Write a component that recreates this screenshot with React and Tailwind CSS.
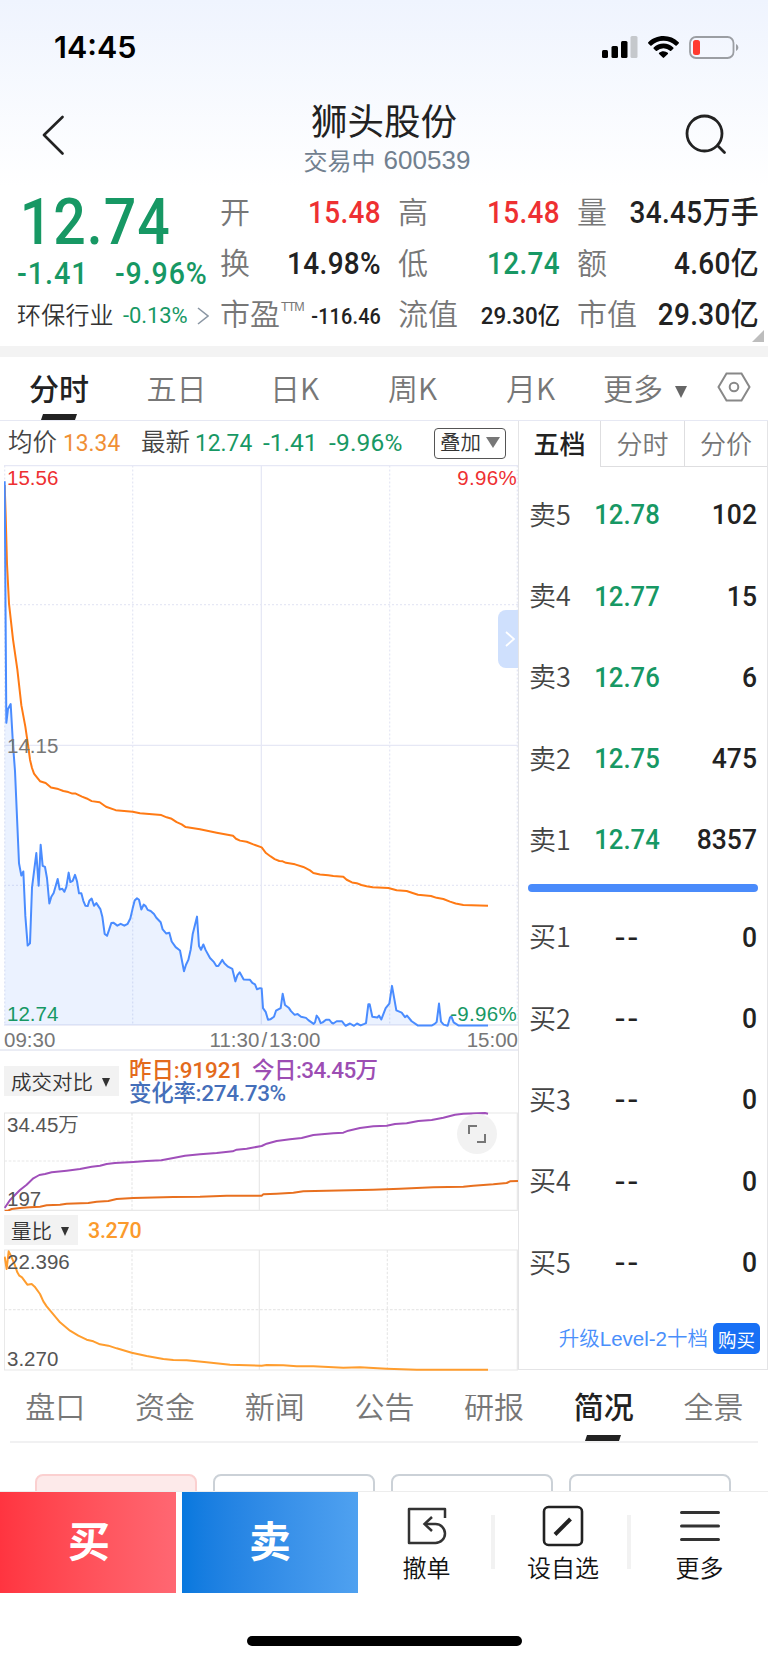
import React from 'react';

const periods = ['分时', '五日', '日K', '周K', '月K'];

const sells = [
    { label: '卖5', price: '12.78', qty: '102' },
    { label: '卖4', price: '12.77', qty: '15' },
    { label: '卖3', price: '12.76', qty: '6' },
    { label: '卖2', price: '12.75', qty: '475' },
    { label: '卖1', price: '12.74', qty: '8357' },
];

const buys = ['买1', '买2', '买3', '买4', '买5'];

const sections = ['盘口', '资金', '新闻', '公告', '研报', '简况', '全景'];

const priceLine =
    '14,30 19,672 24,635 32,622 39,730 45,800 57,1045 64,1078 70,1067 76,1185 83,1264 90,1258 96,1110 109,1018 116,1105 122,996 128,1052 135,1055 141,1085 148,1152 154,1134 161,1124 173,1087 179,1115 187,1113 193,1121 199,1108 206,1070 211,1095 218,1092 225,1076 231,1093 237,1125 244,1125 250,1145 256,1158 263,1159 268,1145 275,1139 282,1158 289,1151 301,1167 307,1187 314,1233 321,1238 327,1223 334,1204 340,1203 352,1211 362,1206 373,1211 383,1206 391,1192 398,1165 404,1144 411,1138 417,1142 424,1168 431,1155 437,1159 443,1169 452,1172 462,1180 469,1190 482,1202 488,1221 499,1232 508,1230 515,1253 527,1268 540,1277 552,1332 558,1315 565,1302 572,1275 578,1234 591,1187 597,1265 603,1275 610,1261 617,1276 630,1297 642,1308 649,1318 655,1318 667,1302 673,1311 684,1320 697,1326 706,1359 712,1343 719,1335 731,1354 750,1355 757,1363 765,1367 771,1380 780,1377 785,1378 789,1430 797,1440 804,1461 811,1460 822,1453 828,1437 842,1430 848,1392 855,1422 867,1430 873,1438 884,1448 893,1446 903,1453 918,1456 925,1462 941,1472 945,1468 950,1450 956,1457 962,1470 968,1468 978,1461 988,1461 995,1469 1000,1471 1010,1465 1026,1465 1032,1472 1037,1477 1050,1471 1062,1477 1071,1471 1082,1476 1093,1472 1098,1470 1105,1420 1109,1420 1117,1453 1132,1455 1137,1450 1144,1460 1157,1430 1168,1418 1176,1371 1189,1436 1205,1442 1215,1454 1221,1450 1235,1465 1253,1476 1296,1476 1304,1472 1310,1467 1317,1418 1323,1466 1331,1474 1343,1477 1350,1455 1354,1452 1361,1468 1375,1476 1464,1476';

const averageLine =
    '14,40 17,120 21,250 27,355 39,450 52,530 64,625 76,682 84,730 90,770 96,792 102,807 112,818 120,827 137,832 153,844 175,848 190,853 205,856 217,860 227,860 246,868 260,873 275,880 299,883 318,895 347,904 398,908 420,912 484,917 500,923 515,927 530,936 545,942 557,949 600,955 650,964 699,972 708,980 720,985 740,988 760,995 785,1003 798,1018 812,1027 824,1034 838,1039 848,1040 858,1044 885,1048 910,1055 930,1064 940,1071 960,1075 985,1077 1000,1079 1030,1081 1040,1089 1056,1096 1070,1098 1084,1103 1100,1106 1118,1109 1165,1111 1190,1117 1220,1119 1240,1125 1254,1129 1293,1132 1310,1137 1330,1140 1350,1147 1367,1152 1390,1156 1464,1158';

const todayVolume =
    '14,592 30,568 60,538 80,522 100,503 118,493 135,490 155,485 200,480 240,475 275,468 300,465 320,460 345,457 400,454 440,451 484,449 520,442 555,435 600,431 650,427 698,422 710,417 740,414 785,406 800,399 830,391 870,386 905,382 940,373 1000,368 1030,366 1045,360 1080,352 1120,347 1160,345 1185,340 1220,338 1255,331 1295,328 1330,321 1365,312 1390,309 1455,307 1464,309';

const lastVolume =
    '14,600 24,600 35,595 60,592 90,590 120,588 140,584 180,582 200,579 265,577 290,573 325,571 350,565 400,562 490,560 520,559 600,558 680,555 785,555 790,551 830,549 880,546 910,542 980,540 1120,537 1200,534 1300,530 1390,528 1420,525 1480,521 1520,517 1530,512 1554,511';

const ratioLine =
    '14,738 20,775 26,722 34,738 44,762 52,785 58,795 66,800 82,822 95,820 104,828 120,850 130,872 140,887 155,905 180,935 210,960 235,975 260,987 280,992 300,1001 325,1005 350,1013 395,1026 440,1036 490,1045 520,1048 560,1049 620,1055 690,1062 785,1065 800,1063 850,1064 890,1067 940,1067 1030,1071 1080,1070 1160,1074 1250,1077 1464,1077';

const Line = ({ points, color, width = 2 }) => (
    <polyline
        points={points}
        fill="none"
        stroke={color}
        strokeWidth={width}
        strokeLinejoin="round"
        vectorEffect="non-scaling-stroke"
    />
);

const StatusBar = () => (
    <div className="flex h-[94px] items-center justify-between pl-[54px] pr-[29px]">
        <span className="font-['Inter',sans-serif] text-[30.5px] font-semibold text-black">14:45</span>
        <div className="flex items-center">
            <svg width="36" height="22" viewBox="0 0 36 22" className="mr-[10px]">
                <rect x="0" y="14" width="6" height="8" rx="1.5" />
                <rect x="9.5" y="10" width="6.5" height="12" rx="1.5" />
                <rect x="19" y="5" width="6.5" height="17" rx="1.5" />
                <rect x="28.5" y="0" width="7" height="22" rx="1.5" fill="#c5c8cc" />
            </svg>
            <svg width="31" height="23" viewBox="0 0 31 23" className="mr-[10px]">
                <path d="M15.5 0C9.6 0 4.2 2.300 .3 6.200c-.4.4-.4.900 0 1.300l2 2c.4.4.9.4 1.300 0A17 17 0 0 1 15.500 4.800a17 17 0 0 1 11.900 4.700c.4.4.9.4 1.300 0l2-2c.4-.4.4-.9 0-1.300A21.700 21.700 0 0 0 15.500 0z" />
                <path d="M15.5 7.600c-3.800 0-7.200 1.400-9.800 3.800-.4.4-.4.900 0 1.300l2.100 2c.4.4.8.4 1.200 0a9.500 9.500 0 0 1 13 0c.4.4.8.4 1.200 0l2.100-2c.4-.4.4-.9 0-1.300a14.400 14.400 0 0 0-9.800-3.800z" />
                <path d="M15.5 15.200c-1.700 0-3.200.6-4.400 1.500-.4.400-.4.900 0 1.200l3.700 3.700c.4.400.9.400 1.300 0l3.800-3.700c.3-.4.3-.9-.1-1.200a7 7 0 0 0-4.300-1.500z" />
            </svg>
            <svg width="50" height="23" viewBox="0 0 50 23">
                <rect x="1" y="1" width="43.500" height="21" rx="6" fill="none" stroke="#9b9ea3" strokeWidth="1.800" />
                <rect x="4" y="4" width="7" height="15" rx="2.500" fill="#ff3b30" />
                <path d="M47 8c1.600.8 2.300 2 2.300 3.500S48.600 14.200 47 15z" fill="#9b9ea3" />
            </svg>
        </div>
    </div>
);

const Header = () => (
    <div className="flex h-[93px] items-start justify-between pl-[42px] pr-[40px]">
        <svg width="22" height="40" viewBox="0 0 22 40" className="mt-[21px]" fill="none" stroke="#222" strokeWidth="2.600" strokeLinejoin="round" strokeLinecap="round">
            <path d="M20.500 2L2 20l18.500 18.500" />
        </svg>
        <div className="ml-[20px] flex flex-col items-center">
            <h1 className="mt-[3px] h-[46px] text-[36.500px] leading-[46px] text-[#222]">狮头股份</h1>
            <p className="flex h-[34px] items-center gap-[8px] pl-[6px] text-[24px] leading-[34px] text-[#71808f]">
                <span>交易中</span>
                <span className="font-['Liberation_Sans',sans-serif] text-[26px]">600539</span>
            </p>
        </div>
        <svg width="44" height="42" viewBox="0 0 44 42" className="mt-[19px]" fill="none" stroke="#222" strokeWidth="2.800" strokeLinecap="round">
            <circle cx="20.500" cy="20.500" r="17.500" />
            <path d="M34 33l6.500 6.500" />
        </svg>
    </div>
);

const statSizes = {
    base: 'text-[31px] scale-x-90 tracking-[0.4px]',
    sm: 'text-[23.500px] scale-x-95 pt-[3px]',
    xs: 'text-[22px] scale-x-90 pt-[3px] tracking-[0.200px]',
};

const Stat = ({ label, sup, value, color = 'text-[#222]', size = 'base' }) => (
    <div className="flex h-[51px] items-center justify-between whitespace-nowrap">
        <span className="flex h-[51px] shrink-0 text-[30px] font-[350] leading-[47px] text-[#777]">
            {label}
            {sup && <span className="pt-[11px] pl-[1px] font-['Liberation_Sans',sans-serif] text-[12.500px] leading-[14px] tracking-[-1px]">{sup}</span>}
        </span>
        <span className={`w-0 origin-right font-['Roboto','Noto_Sans_CJK_SC',sans-serif] font-medium leading-[51px] [direction:rtl] ${statSizes[size]} ${color}`}>
            <bdi dir="ltr">{value}</bdi>
        </span>
    </div>
);

const Quote = () => (
    <div className="relative flex h-[159px] pl-[17px]">
        <div className="w-[203px] font-['Roboto','Noto_Sans_CJK_SC',sans-serif] text-[#179864]">
            <div className="h-[60px] origin-left scale-x-88 pl-[3px] text-[65px] font-medium leading-[70px] tracking-[1.200px]">12.74</div>
            <div className="flex h-[50px] text-[31px] font-medium leading-[53px] tracking-[1px]">
                <span className="w-[98px] origin-left scale-x-93">-1.41</span>
                <span className="origin-left scale-x-92">-9.96%</span>
            </div>
            <div className="flex h-[38px] items-center">
                <span className="w-[106px] text-[24px] font-[350] leading-[38px] tracking-[0.200px] text-[#333]">环保行业</span>
                <span className="text-[22px] leading-[38px] tracking-[-0.100px]">-0.13%</span>
                <svg width="12" height="18" viewBox="0 0 12 18" className="ml-[9px]" fill="none" stroke="#8a96a3" strokeWidth="1.600">
                    <path d="M1 1l10 8-10 8" />
                </svg>
            </div>
        </div>
        <div className="w-[161px]">
            <Stat label="开" value="15.48" color="text-[#ee3032]" />
            <Stat label="换" value="14.98%" />
            <Stat label="市盈" sup="TTM" value="-116.46" size="xs" />
        </div>
        <div className="ml-[17px] w-[162px]">
            <Stat label="高" value="15.48" color="text-[#ee3032]" />
            <Stat label="低" value="12.74" color="text-[#179864]" />
            <Stat label="流值" value="29.30亿" size="sm" />
        </div>
        <div className="ml-[17px] w-[182px]">
            <Stat label="量" value="34.45万手" />
            <Stat label="额" value="4.60亿" />
            <Stat label="市值" value="29.30亿" />
        </div>
        <svg width="12" height="12" viewBox="0 0 12 12" className="absolute right-[4px] bottom-[4px]">
            <path d="M12 0v12H0z" fill="#bdbdbd" />
        </svg>
    </div>
);

const Underline = () => (
    <svg width="36" height="6" viewBox="0 0 36 6" className="absolute bottom-0 left-1/2 -translate-x-1/2">
        <path d="M2 0h34l-2 6H0z" fill="#222" />
    </svg>
);

const PeriodTabs = () => (
    <div className="flex h-[64px] border-b border-[#e6e8f3] text-[30px] font-[350] leading-[60px] text-[#777]">
        {periods.map((name, i) => (
            <div key={name} className={i === 0 ? 'relative w-[118px] text-center font-medium text-[#222]' : 'w-[118px] pr-[1px] text-center'}>
                {name}
                {i === 0 && <Underline />}
            </div>
        ))}
        <div className="flex h-[60px] items-center pl-[13px]">
            更多
            <svg width="12" height="12" viewBox="0 0 12 12" className="mt-[9px] ml-[12px]">
                <path d="M0 0h12L6 12z" fill="#666" />
            </svg>
        </div>
        <svg width="34" height="30" viewBox="0 0 34 30" className="mt-[15px] ml-[30px]" fill="none" stroke="#888" strokeWidth="2">
            <path d="M9.500 1.500h15L32.500 15l-8 13.500h-15L1.500 15z" />
            <circle cx="17" cy="15" r="4.300" />
        </svg>
    </div>
);

const MainChart = () => (
    <div className="relative ml-[4px] h-[562px] w-[514px] font-['Liberation_Sans',sans-serif] text-[20.500px] leading-[24px]">
        <svg width="514" height="562" viewBox="12 -13.300 1542 1493.600" preserveAspectRatio="none">
            <g stroke="#e6e8f5" strokeWidth="1.300">
                <path d="M12 -12H1554M12 732H1554M784 -12V1475M12 1475H1554" fill="none" vectorEffect="non-scaling-stroke" />
                <path d="M14 -12V1475M398 -12V1475M1169 -12V1475M1552 -12V1475M12 358H1554M12 1104H1554" fill="none" strokeDasharray="2 2" vectorEffect="non-scaling-stroke" />
            </g>
            <polygon points={`14,1475 ${priceLine} 1464,1475`} fill="#4a8cff" fillOpacity="0.110" />
            <Line points={averageLine} color="#ff7a14" />
            <Line points={priceLine} color="#4a8cff" />
        </svg>
        <span className="absolute top-[1px] left-[3px] text-[#ee3032]">15.56</span>
        <span className="absolute top-[1px] right-[1px] tracking-[0.300px] text-[#ee3032]">9.96%</span>
        <span className="absolute top-[269px] left-[3px] text-[#777]">14.15</span>
        <span className="absolute bottom-[1px] left-[3px] text-[#179864]">12.74</span>
        <span className="absolute right-[1px] bottom-[1px] tracking-[0.300px] text-[#179864]">-9.96%</span>
        <div className="absolute top-[145px] right-0 flex h-[58px] w-[20px] items-center justify-center rounded-l-[8px] bg-[#cfe0fd]">
            <svg width="10" height="16" viewBox="0 0 10 16" className="ml-[4px]" fill="none" stroke="#fff" strokeWidth="1.800">
                <path d="M1 1l8 7-8 7" />
            </svg>
        </div>
    </div>
);

const Dropdown = ({ children }) => (
    <div className="flex h-[30px] items-center bg-[#f2f2f2] px-[7px] text-[20.500px] font-[350] leading-[30px] text-[#333]">
        {children}
        <svg width="8" height="9" viewBox="0 0 8 9" className="mt-[3px] mr-[2px] ml-[9px]">
            <path d="M0 0h8L4 9z" fill="#333" />
        </svg>
    </div>
);

const VolumeCompare = () => (
    <div>
        <div className="flex h-[61px] pl-[4px]">
            <div className="pt-[15px]">
                <Dropdown>成交对比</Dropdown>
            </div>
            <div className="ml-[10px] pt-[8px] font-['Roboto','Noto_Sans_CJK_SC',sans-serif] text-[22.500px] leading-[23px] whitespace-nowrap">
                <p className="flex gap-[9px] font-medium">
                    <span className="tracking-[-0.100px] text-[#e36a1c]">昨日:91921</span>
                    <span className="tracking-[-0.600px] text-[#9c4db3]">今日:34.45万</span>
                </p>
                <p className="font-medium tracking-[-0.300px] text-[#456fba]">变化率:274.73%</p>
            </div>
        </div>
        <div className="relative ml-[4px] h-[99px] w-[514px] font-['Liberation_Sans','Noto_Sans_CJK_SC',sans-serif] text-[20.500px] leading-[24px] text-[#555]">
            <svg width="514" height="99" viewBox="12 304 1542 297">
                <g stroke="#e8e8e8" strokeWidth="3.500" fill="none">
                    <path d="M13 307H1552V599H13zM778 307V599" />
                    <path d="M396 307V599M1162 307V599M13 451H1552" strokeDasharray="8 5" />
                </g>
                <Line points={lastVolume} color="#e8701f" />
                <Line points={todayVolume} color="#a04fba" />
            </svg>
            <span className="absolute top-[1px] left-[3px] font-[350]">34.45万</span>
            <span className="absolute bottom-0 left-[3px]">197</span>
            <div className="absolute top-[2px] left-[453px] flex h-[40px] w-[40px] items-center justify-center rounded-full bg-[#f2f2f2]">
                <svg width="20" height="20" viewBox="0 0 20 20" fill="none" stroke="#777" strokeWidth="2">
                    <path d="M2 10V2h8M18 10v8h-8" />
                </svg>
            </div>
        </div>
    </div>
);

const VolumeRatio = () => (
    <div>
        <div className="flex h-[38px] items-start pt-[4px] pl-[4px]">
            <Dropdown>量比</Dropdown>
            <span className="ml-[10px] font-['Roboto',sans-serif] text-[21.500px] font-medium leading-[32px] tracking-[-0.300px] text-[#fb9a2c]">3.270</span>
        </div>
        <div className="relative ml-[4px] h-[122px] w-[514px] font-['Liberation_Sans',sans-serif] text-[20.500px] leading-[24px] text-[#555]">
            <svg width="514" height="122" viewBox="12 715 1542 366">
                <g stroke="#e8e8e8" strokeWidth="3.500" fill="none">
                    <path d="M13 718H1552V1078H13zM778 718V1078" />
                    <path d="M396 718V1078M1162 718V1078M13 897H1552" strokeDasharray="8 5" />
                </g>
                <Line points={ratioLine} color="#ff9d2e" />
            </svg>
            <span className="absolute top-[1px] left-[3px]">22.396</span>
            <span className="absolute bottom-0 left-[3px]">3.270</span>
        </div>
    </div>
);

const ChartPanel = () => (
    <div className="w-[518px]">
        <div className="flex h-[44px] items-center pl-[8px] font-['Roboto','Noto_Sans_CJK_SC',sans-serif] text-[24.500px] leading-[44px]">
            <span className="w-[55px] font-[350] text-[#444]">均价</span>
            <span className="w-[78px] origin-left scale-x-93 text-[#f08f35]">13.34</span>
            <span className="w-[54px] font-[350] text-[#444]">最新</span>
            <span className="w-[68px] origin-left scale-x-93 text-[#179864]">12.74</span>
            <span className="w-[66px] text-[#179864]">-1.41</span>
            <span className="w-[105px] tracking-[0.200px] text-[#179864]">-9.96%</span>
            <button className="flex h-[31px] w-[72px] items-center justify-center gap-[5px] rounded-[4px] border border-[#555] text-[20.500px] font-[350] leading-[29px] text-[#333]">
                叠加
                <svg width="14" height="11" viewBox="0 0 14 11" className="mb-[2px]">
                    <path d="M0 0h14L7 11z" fill="#777" />
                </svg>
            </button>
        </div>
        <MainChart />
        <div className="flex h-[24px] justify-between border-b-2 border-[#eaecf4] pl-[4px] font-['Liberation_Sans',sans-serif] text-[20.500px] leading-[26px] text-[#777]">
            <span>09:30</span>
            <span className="pl-[8px]">
                11:30<span className="px-[2px]">/</span>13:00
            </span>
            <span>15:00</span>
        </div>
        <VolumeCompare />
        <VolumeRatio />
    </div>
);

const BookRow = ({ label, price, qty }) => (
    <div className="flex h-[81.300px] items-center pr-[10px] pl-[10px] font-['Roboto','Noto_Sans_CJK_SC',sans-serif] text-[28.500px] font-medium">
        <span className="w-[57px] pb-[3px] font-['Noto_Sans_CJK_SC',sans-serif] text-[27px] font-[350] text-[#444]">{label}</span>
        {price ? (
            <span className="flex w-[82px] scale-x-90 justify-center text-[#179864]">{price}</span>
        ) : (
            <span className="w-[82px] scale-x-110 pl-[1px] text-center tracking-[2px] text-[#222]">--</span>
        )}
        <span className="flex-1 origin-right scale-x-93 text-right text-[#222]">{qty}</span>
    </div>
);

const OrderBook = () => (
    <div className="flex h-[949px] w-[250px] flex-col border-x border-b border-[#e4e4e6]">
        <div className="flex h-[46px] shrink-0 text-center text-[26px] leading-[44px]">
            <div className="w-[81px] font-medium text-[#222]">五档</div>
            <div className="w-[84px] border-b border-l border-[#dedee0] font-[350] text-[#777]">分时</div>
            <div className="flex-1 border-b border-l border-[#dedee0] font-[350] text-[#777]">分价</div>
        </div>
        <div className="pt-[8px]">
            {sells.map((s) => (
                <BookRow key={s.label} {...s} />
            ))}
        </div>
        <div className="mt-[3px] mr-[9px] mb-[5px] ml-[9px] h-[8px] shrink-0 rounded-full bg-[#4a8bfb]" />
        {buys.map((label) => (
            <BookRow key={label} label={label} qty="0" />
        ))}
        <div className="mt-[19px] flex h-[32px] items-center justify-end pr-[7px]">
            <span className="mr-[5px] pt-[1px] font-['Liberation_Sans','Noto_Sans_CJK_SC',sans-serif] text-[20.500px] font-[350] text-[#4a8ffb]">升级Level-2十档</span>
            <button className="h-[31px] w-[47px] rounded-[5px] bg-[#1870f5] text-[18.500px] leading-[30px] text-white">购买</button>
        </div>
    </div>
);

const SectionTabs = () => (
    <div className="mx-[10px] flex h-[72px] border-b-2 border-[#f1f1f2] text-[30px] font-[350] leading-[68px] text-[#777]">
        {sections.map((name) => (
            <div
                key={name}
                className={name === '简况' ? 'relative w-[109.700px] shrink-0 pr-[19px] text-center font-medium text-[#222]' : 'w-[109.700px] shrink-0 pr-[19px] text-center'}
            >
                {name}
                {name === '简况' && (
                    <div className="absolute bottom-0 left-0 h-[6px] w-[90px]">
                        <Underline />
                    </div>
                )}
            </div>
        ))}
    </div>
);

const Cards = () => (
    <div className="flex h-[48px] gap-[16px] overflow-hidden pt-[31px] pl-[35px]">
        <div className="h-[60px] w-[162px] rounded-[8px] border-2 border-[#fbd0d0] bg-[#fdeaea]" />
        <div className="h-[60px] w-[162px] rounded-[8px] border-2 border-[#cbd1d7]" />
        <div className="h-[60px] w-[162px] rounded-[8px] border-2 border-[#cbd1d7]" />
        <div className="h-[60px] w-[162px] rounded-[8px] border-2 border-[#cbd1d7]" />
    </div>
);

const BottomBar = () => (
    <div className="flex h-[103px] border-t border-[#ededed] text-[24px] font-[350] text-[#111]">
        <button className="h-[101px] w-[176px] bg-linear-to-r from-[#ff3440] to-[#ff6772] pb-[7px] pl-[2px] text-[42px] font-bold leading-[60px] text-white">
            买
        </button>
        <button className="ml-[6px] h-[101px] w-[176px] bg-linear-to-r from-[#0778de] to-[#4fa1f0] pb-[7px] text-[42px] font-bold leading-[60px] text-white">
            卖
        </button>
        <div className="flex w-[133px] flex-col items-center pt-[13px]">
            <svg width="40" height="42" viewBox="0 0 40 42" className="ml-[5px]" fill="none" stroke="#333" strokeWidth="2.500">
                <path d="M38 13V4H2v34h26.500a9.500 9.500 0 0 0 0-19H18" strokeLinejoin="round" />
                <path d="M25 12l-7.500 7 7.500 7" />
            </svg>
            <span className="mt-[3px] ml-[4px] leading-[34px]">撤单</span>
        </div>
        <div className="mt-[23px] h-[54px] w-[4px] bg-[#f2f2f2]" />
        <div className="flex w-[132px] flex-col items-center pt-[13px] pl-[4px]">
            <svg width="42" height="42" viewBox="0 0 42 42" fill="none" stroke="#222" strokeWidth="2.600">
                <rect x="2" y="2" width="38" height="38" rx="4.500" />
                <path d="M13 29.500L28.500 14" strokeWidth="4" />
            </svg>
            <span className="mt-[3px] leading-[34px]">设自选</span>
        </div>
        <div className="mt-[23px] h-[54px] w-[4px] bg-[#f2f2f2]" />
        <div className="flex flex-1 flex-col items-center pt-[13px]">
            <svg width="42" height="42" viewBox="0 0 42 42" stroke="#333" strokeWidth="3" strokeLinecap="round">
                <path d="M2.500 7.500h37M2.500 21h37M2.500 34.500h37" />
            </svg>
            <span className="mt-[3px] leading-[34px]">更多</span>
        </div>
    </div>
);

const App = () => {
    return (
        <div className="flex h-[1663px] w-[768px] flex-col overflow-hidden bg-white font-['Noto_Sans_CJK_SC',sans-serif]">
            <div className="bg-linear-to-b from-[#eff4fe] to-white">
                <StatusBar />
                <Header />
            </div>
            <Quote />
            <div className="h-[11px] shrink-0 bg-[#f3f3f3]" />
            <PeriodTabs />
            <div className="flex h-[950px]">
                <ChartPanel />
                <OrderBook />
            </div>
            <SectionTabs />
            <Cards />
            <BottomBar />
            <div className="mx-auto mt-[42px] h-[10px] w-[275px] rounded-full bg-black" />
        </div>
    );
};

export default App;
